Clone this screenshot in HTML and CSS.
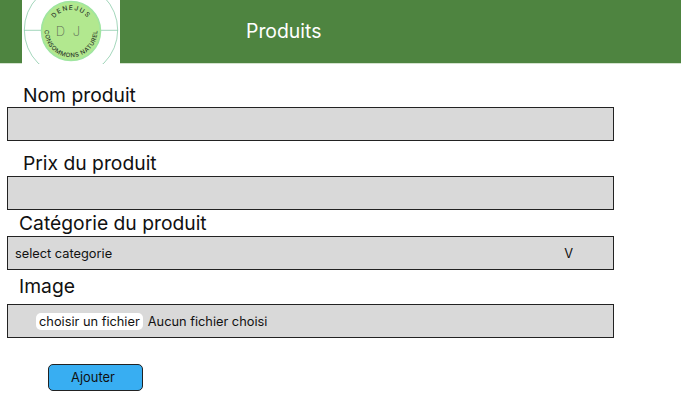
FILE: index.html
```html
<!DOCTYPE html>
<html lang="fr">
<head>
    <meta charset="UTF-8">
    <title>Produits</title>
    <link rel="stylesheet" href="styles.css">
</head>
<body>
    <header class="topbar">
        <div class="logo">
            <svg width="98" height="64" viewBox="0 0 98 64">
                <defs>
                    <path id="arc-top" d="M 28 31 A 21 21 0 0 1 70 31"></path>
                    <path id="arc-bottom" d="M 23 27 A 26.3 26.3 0 1 0 75 27"></path>
                </defs>
                <circle cx="49" cy="30" r="46.7" fill="none" stroke="#8ccbaa" stroke-width="0.8"></circle>
                <path d="M2 30.3H20M78 30.3H96" stroke="#8ccbaa" stroke-width="0.8"></path>
                <circle cx="49" cy="31" r="29.5" fill="#b2e88f" stroke="#9fe5a0" stroke-width="1.5"></circle>
                <text class="ring-text top"><textPath href="#arc-top" startOffset="50%" text-anchor="middle">DENEJUS</textPath></text>
                <text class="ring-text"><textPath href="#arc-bottom" startOffset="50%" text-anchor="middle">CONSOMMONS NATUREL</textPath></text>
                <text class="initials" x="47" y="36" text-anchor="middle">D J</text>
            </svg>
        </div>
        <h1 class="title">Produits</h1>
    </header>

    <form class="product-form">
        <label class="label first">Nom produit</label>
        <div class="field"></div>

        <label class="label second">Prix du produit</label>
        <div class="field"></div>

        <label class="label third">Catégorie du produit</label>
        <div class="field select-field">
            <span>select categorie</span>
            <span class="arrow">V</span>
        </div>

        <label class="label fourth">Image</label>
        <div class="field file-field">
            <span class="file-btn">choisir un fichier</span>
            <span>Aucun fichier choisi</span>
        </div>

        <button type="button" class="submit">Ajouter</button>
    </form>
</body>
</html>
```

FILE: styles.css
```css
body {
    margin: 0;
    font-family: 'Inter', sans-serif;
    color: #111;
    background: white;
}

.topbar {
    display: flex;
    align-items: flex-start;
    height: 63px;
    padding-left: 22px;
    border-bottom: 1px solid #d3e2ce;
    background: #4e8440;
}

.logo {
    width: 98px;
    height: 64px;
    background: white;
}

.logo svg {
    display: block;
}

.ring-text {
    font-size: 6px;
    font-weight: 500;
    letter-spacing: 0.5px;
    fill: #2f3a2c;
}

.ring-text.top {
    font-size: 6.5px;
    letter-spacing: 1.2px;
}

.initials {
    font-size: 13px;
    font-weight: 200;
    letter-spacing: 2px;
    fill: #5c6b55;
}

.title {
    margin: 19px 0 0 126px;
    font-size: 19.4px;
    font-weight: 400;
    line-height: 24px;
    color: white;
}

.product-form {
    display: flex;
    flex-direction: column;
    align-items: flex-start;
    padding-left: 7px;
}

.label {
    font-size: 19.3px;
    line-height: 24px;
}

.label.first {
    margin: 19px 0 0 16px;
}

.label.second {
    margin: 10px 0 1px 16px;
}

.label.third {
    margin: 1px 0 1px 12px;
}

.label.fourth {
    margin: 4px 0 6px 12px;
}

.field {
    display: flex;
    align-items: center;
    box-sizing: border-box;
    width: 607px;
    height: 34px;
    border: 1px solid #222;
    background: #d9d9d9;
    font-size: 12.8px;
}

.select-field {
    justify-content: space-between;
    padding: 0 40px 0 7px;
}

.file-field {
    gap: 5px;
    padding-left: 28px;
}

.file-btn {
    padding: 1px 3px;
    border-radius: 5px;
    background: white;
}

.submit {
    box-sizing: border-box;
    width: 95px;
    height: 27px;
    margin: 26px 0 0 41px;
    padding: 0 5px 0 0;
    border: 1px solid #222;
    border-radius: 5px;
    background: #38aef2;
    font-family: inherit;
    font-size: 12.9px;
    color: #111;
}
```
